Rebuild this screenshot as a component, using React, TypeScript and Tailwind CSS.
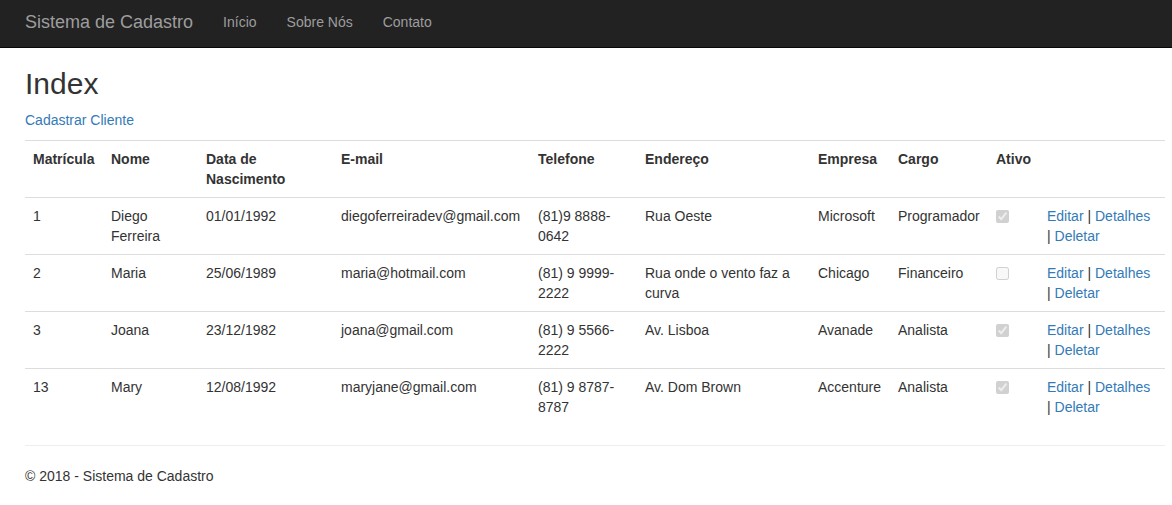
const rows = [
  { id: "1", nome: "Diego Ferreira", nasc: "01/01/1992", email: "diegoferreiradev@gmail.com", tel: ["(81)9 8888-", "0642"], end: "Rua Oeste", empresa: "Microsoft", cargo: "Programador", ativo: true },
  { id: "2", nome: "Maria", nasc: "25/06/1989", email: "maria@hotmail.com", tel: ["(81) 9 9999-", "2222"], end: "Rua onde o vento faz a curva", empresa: "Chicago", cargo: "Financeiro", ativo: false },
  { id: "3", nome: "Joana", nasc: "23/12/1982", email: "joana@gmail.com", tel: ["(81) 9 5566-", "2222"], end: "Av. Lisboa", empresa: "Avanade", cargo: "Analista", ativo: true },
  { id: "13", nome: "Mary", nasc: "12/08/1992", email: "maryjane@gmail.com", tel: ["(81) 9 8787-", "8787"], end: "Av. Dom Brown", empresa: "Accenture", cargo: "Analista", ativo: true },
];

const headers = ["Matrícula", "Nome", "Data de Nascimento", "E-mail", "Telefone", "Endereço", "Empresa", "Cargo", "Ativo", ""];

const App: React.FC = () => {
  return (
    <div className="min-h-[505px] bg-white text-[14px] leading-[20px] text-[#333]" style={{ fontFamily: '"Liberation Sans", Arial, sans-serif' }}>
      <nav className="h-[48px] bg-[#222] border-b border-[#080808] flex items-start pt-[12px] pl-[25px]">
        <a className="text-[18px] leading-[20px] text-[#9d9d9d] pr-[15px]">Sistema de Cadastro</a>
        <a className="px-[15px] text-[#9d9d9d]">Início</a>
        <a className="px-[15px] text-[#9d9d9d]">Sobre Nós</a>
        <a className="px-[15px] text-[#9d9d9d]">Contato</a>
      </nav>

      <div className="ml-[25px] w-[1140px]">
        <h2 className="mt-[19px] mb-[10px] text-[30px] leading-[33px] font-normal">Index</h2>
        <p className="mb-[10px]">
          <a className="text-[#337ab7]">Cadastrar Cliente</a>
        </p>

        <table className="w-[1140px] table-fixed border-collapse">
          <colgroup>
            <col className="w-[78px]" />
            <col className="w-[95px]" />
            <col className="w-[135px]" />
            <col className="w-[197px]" />
            <col className="w-[107px]" />
            <col className="w-[173px]" />
            <col className="w-[80px]" />
            <col className="w-[98px]" />
            <col className="w-[51px]" />
            <col className="w-[126px]" />
          </colgroup>
          <tbody>
            <tr>
              {headers.map((h, i) => (
                <th key={i} className="border-t border-[#ddd] p-[8px] text-left align-top font-bold">
                  {h}
                </th>
              ))}
            </tr>
            {rows.map((r) => (
              <tr key={r.id}>
                <td className="border-t border-[#ddd] p-[8px] align-top">{r.id}</td>
                <td className="border-t border-[#ddd] p-[8px] align-top">{r.nome}</td>
                <td className="border-t border-[#ddd] p-[8px] align-top">{r.nasc}</td>
                <td className="border-t border-[#ddd] p-[8px] align-top">{r.email}</td>
                <td className="border-t border-[#ddd] p-[8px] align-top">
                  {r.tel[0]}
                  <wbr />
                  {r.tel[1]}
                </td>
                <td className="border-t border-[#ddd] p-[8px] align-top">{r.end}</td>
                <td className="border-t border-[#ddd] p-[8px] align-top">{r.empresa}</td>
                <td className="border-t border-[#ddd] p-[8px] align-top">{r.cargo}</td>
                <td className="border-t border-[#ddd] p-[8px] align-top">
                  <input type="checkbox" checked={r.ativo} disabled readOnly className="mt-[4px] w-[13px] h-[13px] block" />
                </td>
                <td className="border-t border-[#ddd] p-[8px] align-top">
                  <a className="text-[#337ab7]">Editar</a> | <a className="text-[#337ab7]">Detalhes</a> |{" "}
                  <a className="text-[#337ab7]">Deletar</a>
                </td>
              </tr>
            ))}
          </tbody>
        </table>

        <hr className="mt-[20px] mb-[20px] border-t border-[#eee]" />
        <footer>
          <p>© 2018 - Sistema de Cadastro</p>
        </footer>
      </div>
    </div>
  );
};

export default App;
